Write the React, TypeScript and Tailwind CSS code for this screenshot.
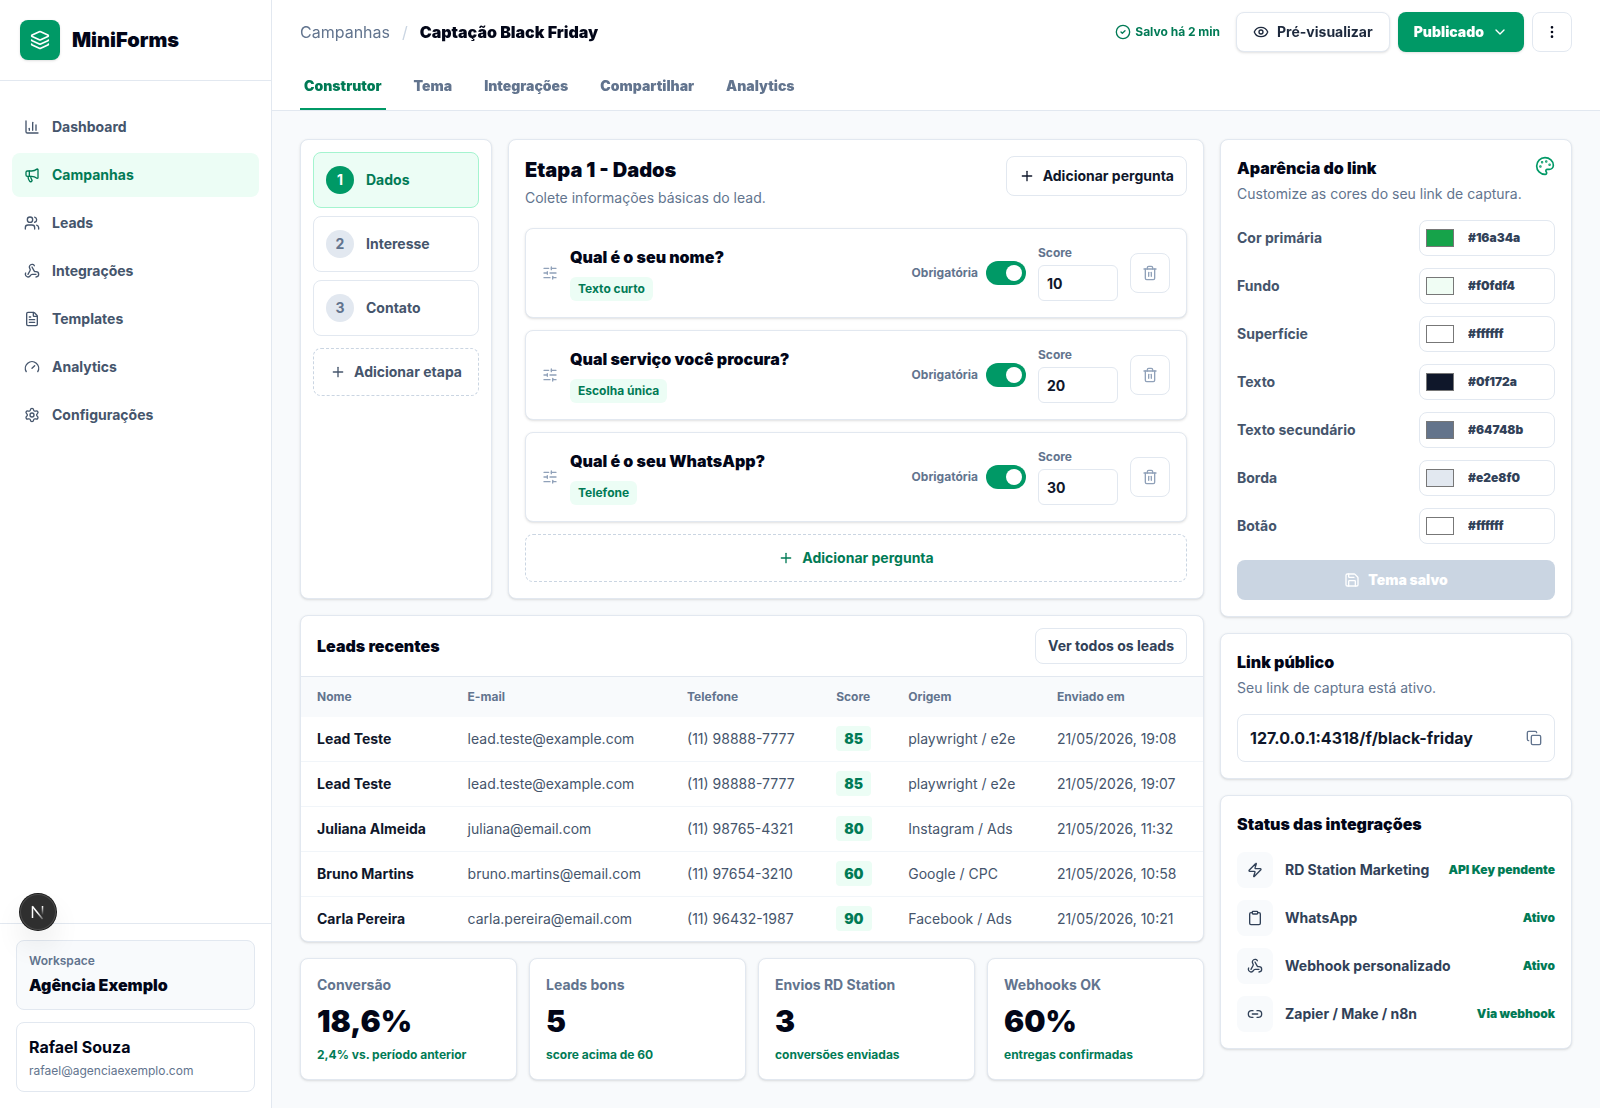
import { useState } from 'react'
import {
  ChartColumn,
  ChevronDown,
  CircleCheck,
  Clipboard,
  Copy,
  EllipsisVertical,
  Eye,
  FileText,
  Gauge,
  Layers,
  Link2,
  Megaphone,
  Palette,
  Plus,
  Save,
  Settings,
  SlidersHorizontal,
  Trash2,
  Users,
  Webhook,
  Zap,
} from 'lucide-react'
import { clsx } from 'clsx'

const navItems = [
  { label: 'Dashboard', icon: ChartColumn },
  { label: 'Campanhas', icon: Megaphone },
  { label: 'Leads', icon: Users },
  { label: 'Integrações', icon: Webhook },
  { label: 'Templates', icon: FileText },
  { label: 'Analytics', icon: Gauge },
  { label: 'Configurações', icon: Settings },
]

const tabs = ['Construtor', 'Tema', 'Integrações', 'Compartilhar', 'Analytics']

const steps = ['Dados', 'Interesse', 'Contato']

const initialQuestions = [
  { id: 'nome', title: 'Qual é o seu nome?', type: 'Texto curto', required: true, score: '10' },
  { id: 'servico', title: 'Qual serviço você procura?', type: 'Escolha única', required: true, score: '20' },
  { id: 'whatsapp', title: 'Qual é o seu WhatsApp?', type: 'Telefone', required: true, score: '30' },
]

const leads = [
  { name: 'Lead Teste', email: 'lead.teste@example.com', phone: '(11) 98888-7777', score: 85, source: 'playwright / e2e', sentAt: '21/05/2026, 19:08' },
  { name: 'Lead Teste', email: 'lead.teste@example.com', phone: '(11) 98888-7777', score: 85, source: 'playwright / e2e', sentAt: '21/05/2026, 19:07' },
  { name: 'Juliana Almeida', email: 'juliana@email.com', phone: '(11) 98765-4321', score: 80, source: 'Instagram / Ads', sentAt: '21/05/2026, 11:32' },
  { name: 'Bruno Martins', email: 'bruno.martins@email.com', phone: '(11) 97654-3210', score: 60, source: 'Google / CPC', sentAt: '21/05/2026, 10:58' },
  { name: 'Carla Pereira', email: 'carla.pereira@email.com', phone: '(11) 96432-1987', score: 90, source: 'Facebook / Ads', sentAt: '21/05/2026, 10:21' },
]

const stats = [
  { label: 'Conversão', value: '18,6%', note: '2,4% vs. período anterior' },
  { label: 'Leads bons', value: '5', note: 'score acima de 60' },
  { label: 'Envios RD Station', value: '3', note: 'conversões enviadas' },
  { label: 'Webhooks OK', value: '60%', note: 'entregas confirmadas' },
]

const initialColors = [
  { id: 'primary', label: 'Cor primária', value: '#16a34a' },
  { id: 'background', label: 'Fundo', value: '#f0fdf4' },
  { id: 'surface', label: 'Superfície', value: '#ffffff' },
  { id: 'text', label: 'Texto', value: '#0f172a' },
  { id: 'muted', label: 'Texto secundário', value: '#64748b' },
  { id: 'border', label: 'Borda', value: '#e2e8f0' },
  { id: 'button', label: 'Botão', value: '#ffffff' },
]

const integrations = [
  { label: 'RD Station Marketing', status: 'API Key pendente', icon: Zap },
  { label: 'WhatsApp', status: 'Ativo', icon: Clipboard },
  { label: 'Webhook personalizado', status: 'Ativo', icon: Webhook },
  { label: 'Zapier / Make / n8n', status: 'Via webhook', icon: Link2 },
]

const card = 'rounded-lg border border-slate-200 bg-white shadow-sm'

function Sidebar() {
  return (
    <aside className="sticky top-0 flex h-screen w-68 shrink-0 flex-col border-r border-slate-200 bg-white">
      <div className="flex items-center gap-3 border-b border-slate-200 p-5">
        <div className="grid size-10 place-items-center rounded-lg bg-emerald-600 text-white shadow-sm">
          <Layers className="size-5" />
        </div>
        <span className="text-xl font-black text-slate-950">MiniForms</span>
      </div>

      <nav className="flex flex-1 flex-col gap-1 px-3 py-6">
        {navItems.map(({ label, icon: Icon }) => (
          <a
            key={label}
            href="#"
            className={clsx(
              'flex h-11 items-center gap-3 rounded-lg px-3 text-sm font-bold',
              label === 'Campanhas' ? 'bg-emerald-50 text-emerald-700' : 'text-slate-600',
            )}
          >
            <Icon className="size-4" />
            {label}
          </a>
        ))}
      </nav>

      <div className="flex flex-col gap-3 border-t border-slate-200 p-4">
        <div className="rounded-lg border border-slate-200 bg-slate-50 p-3">
          <p className="text-xs font-semibold text-slate-500">Workspace</p>
          <p className="mt-1 font-black text-slate-950">Agência Exemplo</p>
        </div>
        <div className="rounded-lg border border-slate-200 p-3">
          <p className="font-bold text-slate-950">Rafael Souza</p>
          <p className="mt-1 text-xs text-slate-500">rafael@agenciaexemplo.com</p>
        </div>
      </div>
    </aside>
  )
}

function Header() {
  const [tab, setTab] = useState('Construtor')

  return (
    <header className="sticky top-0 z-10 border-b border-slate-200 bg-white/95 px-7 backdrop-blur">
      <div className="flex items-center justify-between py-3">
        <nav aria-label="Breadcrumb" className="flex items-center gap-3">
          <a href="#" className="text-slate-500">Campanhas</a>
          <span className="text-slate-300">/</span>
          <span className="font-black text-slate-950">Captação Black Friday</span>
        </nav>

        <div className="flex items-center gap-2">
          <span className="mr-2 flex items-center gap-1 text-xs font-bold text-emerald-700">
            <CircleCheck className="size-4" />
            Salvo há 2 min
          </span>
          <button className="flex h-10 items-center gap-2 rounded-lg border border-slate-200 bg-white px-4 text-sm font-bold text-slate-800 shadow-sm">
            <Eye className="size-4" />
            Pré-visualizar
          </button>
          <button className="flex h-10 items-center gap-2 rounded-lg bg-emerald-600 px-4 text-sm font-black text-white shadow-sm">
            Publicado
            <ChevronDown className="size-4" />
          </button>
          <button aria-label="Mais opções" className="grid size-10 place-items-center rounded-lg border border-slate-200 bg-white text-slate-950">
            <EllipsisVertical className="size-4" />
          </button>
        </div>
      </div>

      <div role="tablist" className="flex gap-6">
        {tabs.map((name) => (
          <button
            key={name}
            role="tab"
            aria-selected={tab === name}
            onClick={() => setTab(name)}
            className={clsx(
              'border-b-2 px-1 py-3 text-sm font-black',
              tab === name ? 'border-emerald-600 text-emerald-700' : 'border-transparent text-slate-500',
            )}
          >
            {name}
          </button>
        ))}
      </div>
    </header>
  )
}

function StepList() {
  const [active, setActive] = useState('Dados')

  return (
    <section className={clsx(card, 'p-3')}>
      <div className="flex flex-col gap-2">
        {steps.map((step, index) => (
          <button
            key={step}
            onClick={() => setActive(step)}
            className={clsx(
              'flex h-14 items-center gap-3 rounded-lg border px-3 text-sm font-bold',
              active === step ? 'border-emerald-200 bg-emerald-50 text-emerald-700' : 'border-slate-200 text-slate-600',
            )}
          >
            <span
              className={clsx(
                'grid size-7 place-items-center rounded-full',
                active === step ? 'bg-emerald-600 text-white' : 'bg-slate-200 text-slate-500',
              )}
            >
              {index + 1}
            </span>
            {step}
          </button>
        ))}
      </div>
      <button className="mt-3 flex h-12 w-full items-center justify-center gap-2 rounded-lg border border-dashed border-slate-300 text-sm font-bold text-slate-600">
        <Plus className="size-4" />
        Adicionar etapa
      </button>
    </section>
  )
}

function Builder() {
  const [questions, setQuestions] = useState(initialQuestions)

  const update = (id: string, patch: Partial<(typeof initialQuestions)[number]>) =>
    setQuestions((list) => list.map((q) => (q.id === id ? { ...q, ...patch } : q)))

  return (
    <section className={clsx(card, 'p-4')}>
      <div className="flex items-start justify-between gap-4">
        <div>
          <h1 className="text-xl font-black text-slate-950">Etapa 1 - Dados</h1>
          <p className="mt-1 text-sm text-slate-500">Colete informações básicas do lead.</p>
        </div>
        <button className="flex h-10 items-center gap-2 rounded-lg border border-slate-200 px-3 text-sm font-bold text-slate-900">
          <Plus className="size-4" />
          Adicionar pergunta
        </button>
      </div>

      <div className="mt-5 flex flex-col gap-3">
        {questions.map((q) => (
          <article key={q.id} className={clsx(card, 'flex items-center gap-3 p-4')}>
            <SlidersHorizontal className="size-4 text-slate-400" />
            <div className="min-w-0 flex-1">
              <h2 className="font-black text-slate-950">{q.title}</h2>
              <span className="mt-2 inline-block rounded-md bg-emerald-50 px-2 py-1 align-top text-xs font-bold text-emerald-700">
                {q.type}
              </span>
            </div>
            <label className="flex items-center gap-2 text-xs font-bold text-slate-500">
              Obrigatória
              <input
                type="checkbox"
                className="peer sr-only"
                checked={q.required}
                onChange={(e) => update(q.id, { required: e.target.checked })}
              />
              <span className="flex h-6 w-10 items-center rounded-full bg-slate-300 px-1 peer-checked:justify-end peer-checked:bg-emerald-600">
                <span className="size-4 rounded-full bg-white" />
              </span>
            </label>
            <label className="text-xs font-bold text-slate-500">
              Score
              <input
                type="text"
                inputMode="numeric"
                value={q.score}
                onChange={(e) => update(q.id, { score: e.target.value })}
                className="mt-1 block h-9 w-20 rounded-md border border-slate-200 px-2 text-sm font-bold text-slate-900"
              />
            </label>
            <button
              aria-label="Excluir pergunta"
              onClick={() => setQuestions((list) => list.filter((item) => item.id !== q.id))}
              className="grid size-10 place-items-center rounded-lg border border-slate-200 text-slate-400"
            >
              <Trash2 className="size-4" />
            </button>
          </article>
        ))}
        <button className="flex h-12 items-center justify-center gap-2 rounded-lg border border-dashed border-slate-300 text-sm font-bold text-emerald-700">
          <Plus className="size-4" />
          Adicionar pergunta
        </button>
      </div>
    </section>
  )
}

function RecentLeads() {
  return (
    <section className={clsx(card, 'overflow-hidden')}>
      <div className="flex items-center justify-between border-b border-slate-200 px-4 py-3">
        <h2 className="font-black text-slate-950">Leads recentes</h2>
        <button className="h-9 rounded-lg border border-slate-200 px-3 text-sm font-bold text-slate-700">
          Ver todos os leads
        </button>
      </div>
      <table className="w-full text-left text-sm">
        <thead className="bg-slate-50 text-xs text-slate-500">
          <tr>
            {['Nome', 'E-mail', 'Telefone', 'Score', 'Origem', 'Enviado em'].map((title) => (
              <th key={title} className="px-4 py-3 font-bold">{title}</th>
            ))}
          </tr>
        </thead>
        <tbody className="divide-y divide-slate-100">
          {leads.map((lead) => (
            <tr key={lead.email + lead.sentAt} className="text-slate-600">
              <td className="px-4 py-3 font-bold text-slate-900">{lead.name}</td>
              <td className="px-4 py-3">{lead.email}</td>
              <td className="px-4 py-3">{lead.phone}</td>
              <td className="px-4 py-3">
                <span className="rounded bg-emerald-50 px-2 py-1 font-black text-emerald-700">{lead.score}</span>
              </td>
              <td className="px-4 py-3">{lead.source}</td>
              <td className="px-4 py-3">{lead.sentAt}</td>
            </tr>
          ))}
        </tbody>
      </table>
    </section>
  )
}

function Stats() {
  return (
    <section className="grid grid-cols-4 gap-3">
      {stats.map((stat) => (
        <div key={stat.label} className={clsx(card, 'p-4')}>
          <p className="text-sm font-bold text-slate-500">{stat.label}</p>
          <p className="mt-2 text-3xl font-black text-slate-950">{stat.value}</p>
          <p className="mt-2 text-xs font-bold text-emerald-700">{stat.note}</p>
        </div>
      ))}
    </section>
  )
}

function ThemePanel() {
  const [colors, setColors] = useState(initialColors)

  const setColor = (id: string, value: string) =>
    setColors((list) => list.map((c) => (c.id === id ? { ...c, value } : c)))

  return (
    <section className={clsx(card, 'p-4')}>
      <div className="flex items-start justify-between">
        <div>
          <h2 className="font-black text-slate-950">Aparência do link</h2>
          <p className="mt-1 text-sm text-slate-500">Customize as cores do seu link de captura.</p>
        </div>
        <Palette className="size-5 text-emerald-600" />
      </div>

      <div className="mt-4 flex flex-col gap-3">
        {colors.map((color) => (
          <div key={color.id} className="flex items-center justify-between">
            <label htmlFor={color.id} className="text-sm font-bold text-slate-600">{color.label}</label>
            <div className="flex h-9 w-34 items-center gap-2 rounded-lg border border-slate-200 p-1">
              <input
                id={color.id}
                type="color"
                value={color.value}
                onChange={(e) => setColor(color.id, e.target.value)}
                className="h-full w-8 shrink-0"
              />
              <input
                type="text"
                aria-label={`${color.label} (hex)`}
                value={color.value}
                onChange={(e) => setColor(color.id, e.target.value)}
                className="min-w-0 flex-1 px-1 text-xs font-black text-slate-700"
              />
            </div>
          </div>
        ))}
      </div>

      <button
        disabled
        className="mt-4 flex h-10 w-full items-center justify-center gap-2 rounded-lg bg-slate-300 text-sm font-black text-white"
      >
        <Save className="size-4" />
        Tema salvo
      </button>
    </section>
  )
}

function PublicLink() {
  return (
    <section className={clsx(card, 'p-4')}>
      <h2 className="font-black text-slate-950">Link público</h2>
      <p className="mt-1 text-sm text-slate-500">Seu link de captura está ativo.</p>
      <div className="mt-4 flex h-12 items-center justify-between rounded-lg border border-slate-200 px-3">
        <span className="truncate font-bold text-slate-900">127.0.0.1:4318/f/black-friday</span>
        <button aria-label="Copiar link" className="text-slate-500">
          <Copy className="size-4" />
        </button>
      </div>
    </section>
  )
}

function IntegrationStatus() {
  return (
    <section className={clsx(card, 'p-4')}>
      <h2 className="font-black text-slate-950">Status das integrações</h2>
      <ul className="mt-4 flex flex-col gap-3">
        {integrations.map(({ label, status, icon: Icon }) => (
          <li key={label} className="flex items-center gap-3">
            <span className="grid size-9 place-items-center rounded-lg bg-slate-50 text-slate-700">
              <Icon className="size-4" />
            </span>
            <span className="flex-1 text-sm font-bold text-slate-700">{label}</span>
            <span className="text-xs font-black text-emerald-700">{status}</span>
          </li>
        ))}
      </ul>
    </section>
  )
}

// Floating dev tools button, sits over the sidebar
function DevBadge() {
  return (
    <button
      aria-label="Open Next.js Dev Tools"
      className="fixed bottom-[178px] left-5 z-20 grid size-9 place-items-center rounded-full bg-[#2f2f2f] shadow-[0_0_0_1px_#171717,inset_0_0_0_1px_#4a4a4a,0_16px_32px_-8px_rgba(0,0,0,0.24)]"
    >
      <svg width="16" height="16" viewBox="0 0 16 16" fill="none">
        <defs>
          <linearGradient id="dev-diagonal" x1="8" y1="8" x2="14" y2="15" gradientUnits="userSpaceOnUse">
            <stop stopColor="#fff" />
            <stop offset="1" stopColor="#fff" stopOpacity="0.2" />
          </linearGradient>
          <linearGradient id="dev-stem" x1="13" y1="2" x2="13" y2="11" gradientUnits="userSpaceOnUse">
            <stop stopColor="#fff" />
            <stop offset="1" stopColor="#fff" stopOpacity="0" />
          </linearGradient>
        </defs>
        <path d="M2.5 14V2.5" stroke="#fff" strokeWidth="1.5" />
        <path d="M2.3 2.2 12.6 15" stroke="url(#dev-diagonal)" strokeWidth="1.5" />
        <path d="M12.5 2v9" stroke="url(#dev-stem)" strokeWidth="1.5" />
      </svg>
    </button>
  )
}

export default function App() {
  return (
    <div className="flex min-h-screen bg-slate-50 font-[Inter,sans-serif] text-slate-950">
      <Sidebar />
      <div className="min-w-0 flex-1">
        <Header />
        <main className="grid grid-cols-[minmax(0,1fr)_352px] items-start gap-4 p-7">
          <div className="flex flex-col gap-4">
            <div className="grid grid-cols-[192px_minmax(0,1fr)] gap-4">
              <StepList />
              <Builder />
            </div>
            <RecentLeads />
            <Stats />
          </div>
          <div className="flex flex-col gap-4">
            <ThemePanel />
            <PublicLink />
            <IntegrationStatus />
          </div>
        </main>
      </div>
      <DevBadge />
    </div>
  )
}
